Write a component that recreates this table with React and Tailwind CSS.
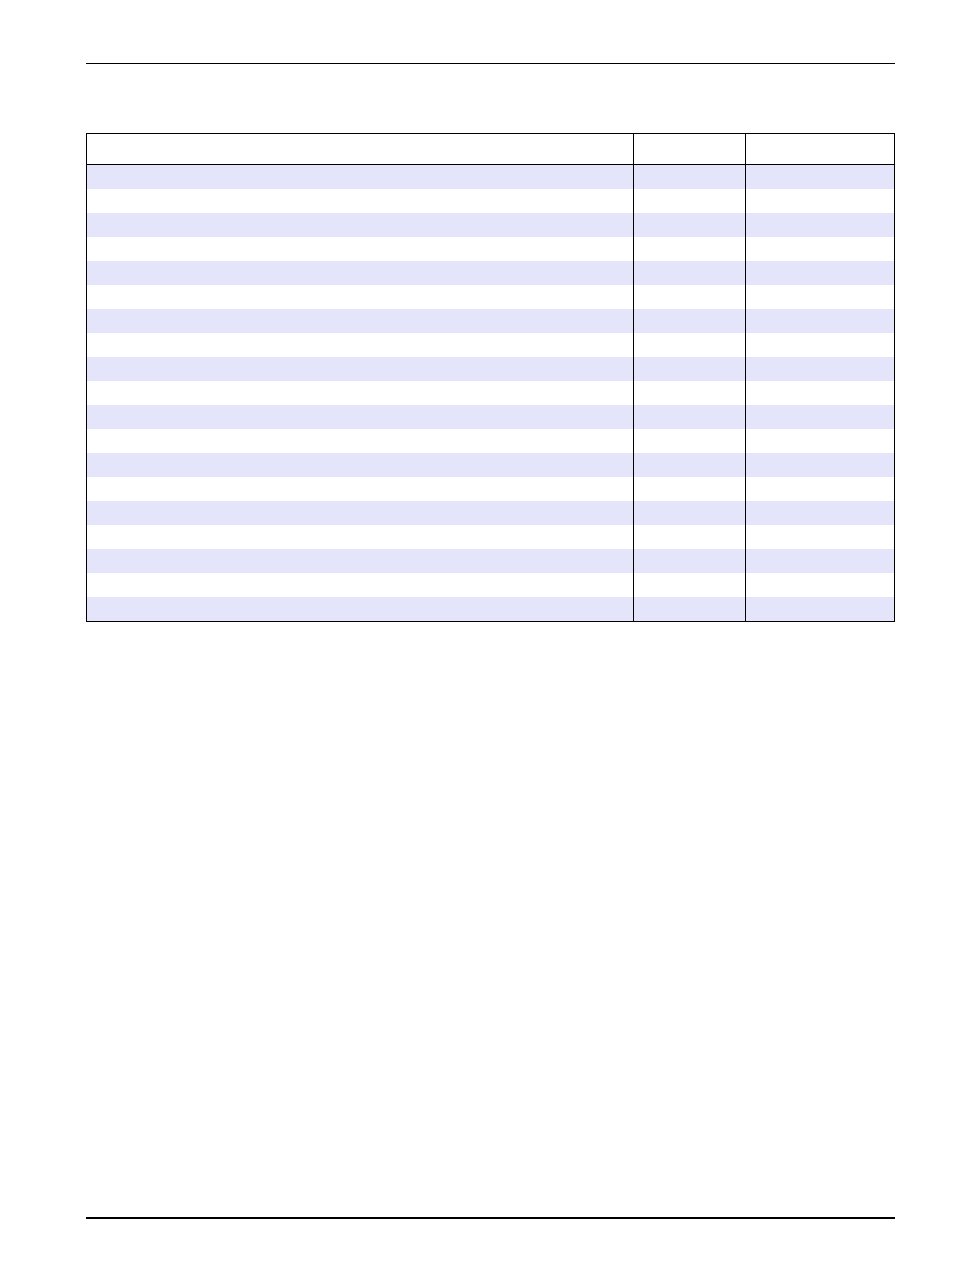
const rows = Array.from({ length: 19 }, (_, i) => i);

const App = () => {
  return (
    <main className="w-[954px] h-[1270px] bg-white flex flex-col font-['Liberation_Sans',sans-serif]">
      {/* Header rule */}
      <div className="ml-[86px] mt-[63px] w-[809px] h-px bg-black" />

      {/* Table */}
      <div className="ml-[86px] mt-[69px] w-[809px] border border-black flex flex-col">
        <div className="flex h-[31px] border-b border-black">
          <div className="w-[546px]" />
          <div className="w-[112px] border-l border-black" />
          <div className="flex-1 border-l border-black" />
        </div>
        {rows.map((i) => (
          <div
            key={i}
            className={`flex h-[24px] ${i % 2 === 0 ? "bg-[#e4e4fa]" : "bg-white"}`}
          >
            <div className="w-[546px]" />
            <div className="w-[112px] border-l border-black" />
            <div className="flex-1 border-l border-black" />
          </div>
        ))}
      </div>

      {/* Footer rule */}
      <div className="ml-[86px] mt-auto mb-[51px] w-[809px] h-[2px] bg-black" />
    </main>
  );
};

export default App;
